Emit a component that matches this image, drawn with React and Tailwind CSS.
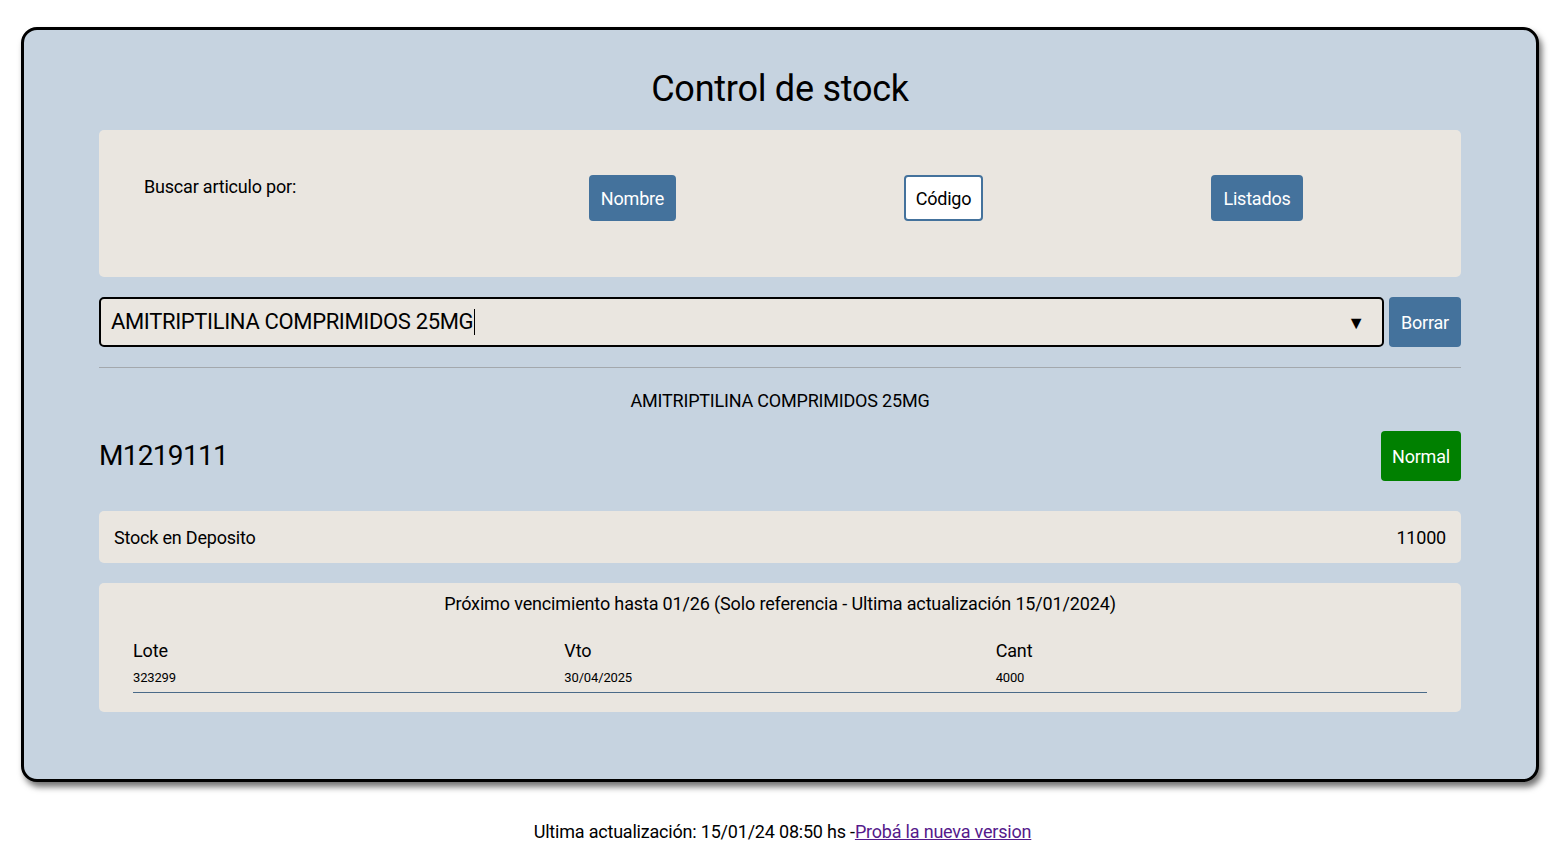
import React from 'react';

const StockPage = () => {
  return (
    <div className="min-h-screen bg-white font-['Roboto','Liberation_Sans',sans-serif] text-black pt-[27px]">
      <div className="ml-[21px] w-[1518px] h-[755px] bg-[#c6d3e0] border-[3px] border-black rounded-[16px] shadow-[3px_5px_6px_rgba(0,0,0,0.55)] px-[75px] pt-[38px]">
        <h1 className="text-[36px] leading-[42px] text-center tracking-[-0.25px]">Control de stock</h1>

        {/* Buscar */}
        <div className="mt-[20px] h-[147px] bg-[#eae6e0] rounded-[5px] pt-[45px] pl-[45px] grid grid-cols-[333px_311px_311px_316px] items-start">
          <span className="text-[18px] leading-[21px] mt-px tracking-[-0.2px]">Buscar articulo por:</span>
          <div className="flex justify-center">
            <button className="h-[46px] px-3 bg-[#44729c] text-white text-[18px] rounded-[4px] tracking-[-0.2px]">Nombre</button>
          </div>
          <div className="flex justify-center">
            <button className="h-[46px] px-[10px] bg-white border-2 border-[#44729c] text-black text-[18px] rounded-[4px] tracking-[-0.2px]">Código</button>
          </div>
          <div className="flex justify-center">
            <button className="h-[46px] px-3 bg-[#44729c] text-white text-[18px] rounded-[4px] tracking-[-0.2px]">Listados</button>
          </div>
        </div>

        {/* Select */}
        <div className="mt-[20px] flex gap-[5px]">
          <div className="flex-1 h-[50px] bg-[#eae6e0] border-2 border-black rounded-[5px] flex items-center pl-[10px] pr-[17px]">
            <span className="text-[22px] border-r border-black pr-px leading-[26px] tracking-[-0.35px]">AMITRIPTILINA COMPRIMIDOS 25MG</span>
            <span className="ml-auto text-[18px]">▼</span>
          </div>
          <button className="w-[72px] h-[50px] bg-[#44729c] text-white text-[18px] rounded-[4px] tracking-[-0.2px]">Borrar</button>
        </div>

        <hr className="mt-[20px] border-0 border-t border-[#a3a8ad]" />

        <p className="mt-[22px] text-center text-[18px] leading-[21px] tracking-[-0.2px]">AMITRIPTILINA COMPRIMIDOS 25MG</p>

        <div className="mt-[20px] h-[50px] flex items-center justify-between">
          <span className="text-[28px] tracking-[-0.7px]">M1219111</span>
          <button className="h-[50px] w-[80px] bg-[#008000] text-white text-[18px] rounded-[4px] tracking-[-0.2px]">Normal</button>
        </div>

        {/* Stock */}
        <div className="mt-[30px] h-[52px] bg-[#eae6e0] rounded-[5px] flex items-center justify-between px-[15px] text-[18px] tracking-[-0.2px]">
          <span>Stock en Deposito</span>
          <span>11000</span>
        </div>

        {/* Vencimiento */}
        <div className="mt-[20px] h-[129px] bg-[#eae6e0] rounded-[5px] pt-[10px] px-[34px] tracking-[-0.15px]">
          <p className="text-center text-[18px] leading-[21px]">Próximo vencimiento hasta 01/26 (Solo referencia - Ultima actualización 15/01/2024)</p>
          <div className="mt-[26px] grid grid-cols-3">
            <span className="text-[18px] leading-[21px]">Lote</span>
            <span className="text-[18px] leading-[21px]">Vto</span>
            <span className="text-[18px] leading-[21px]">Cant</span>
          </div>
          <div className="mt-[9px] grid grid-cols-3 border-b border-[#4a6a88] pb-[6px] text-[13px] leading-[16px]">
            <span>323299</span>
            <span>30/04/2025</span>
            <span>4000</span>
          </div>
        </div>
      </div>

      <p className="mt-[39px] text-center text-[18px] leading-[21px] tracking-[-0.2px]">
        Ultima actualización: 15/01/24 08:50 hs -<a href="#" className="text-[#551a8b] underline">Probá la nueva version</a>
      </p>
    </div>
  );
};

export default function App() {
  return <StockPage />;
}
